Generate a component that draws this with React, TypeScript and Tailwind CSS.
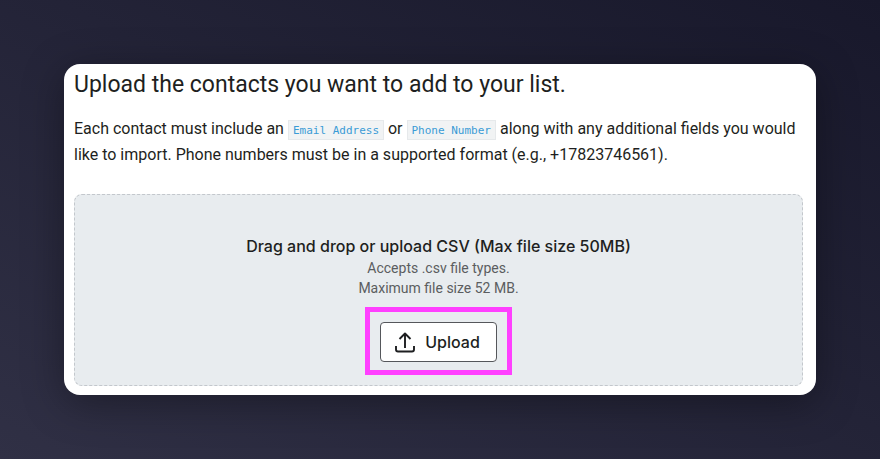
import type { ReactNode } from "react";

function FieldTag({ children }: { children: ReactNode }) {
  return (
    <code className="inline-block h-5 border border-[#e6e9eb] bg-[#f1f3f4] px-1 pt-px align-middle font-['DejaVu_Sans_Mono',monospace] text-[11px] leading-[18px] text-[#3a9bd6]">
      {children}
    </code>
  );
}

function UploadIcon() {
  return (
    <svg
      aria-hidden="true"
      className="size-6"
      viewBox="0 0 24 24"
      fill="none"
      stroke="currentColor"
      strokeWidth="1.9"
      strokeLinejoin="round"
    >
      <path d="M12 18V3.500M6.500 9L12 3.500 17.500 9" />
      <path d="M3 16v3.500a2 2 0 0 0 2 2h14a2 2 0 0 0 2-2V16" />
    </svg>
  );
}

export default function App() {
  return (
    <div className="flex min-h-screen flex-col bg-linear-to-tr from-[#303045] to-[#18182b] p-16 font-['Roboto',sans-serif] text-[#1e1f21]">
      <main className="rounded-2xl bg-white pt-1 pr-[13px] pb-[9px] pl-[10px] shadow-[0_8px_40px_rgba(0,0,0,0.35)]">
        <h1 className="text-[23px] leading-[34px]">Upload the contacts you want to add to your list.</h1>
        <p className="-mr-2 mt-[14px] text-[16px] leading-[26px]">
          Each contact must include an <FieldTag>Email Address</FieldTag> or <FieldTag>Phone Number</FieldTag> along
          with any additional fields you would like to import. Phone numbers must be in a supported format (e.g.,
          +17823746561).
        </p>
        <section className="mt-[26px] flex flex-col items-center rounded-lg border border-dashed border-[#c3c7cc] bg-[#e8ecef] pt-[39px] pb-[10px] text-center">
          <h2 className="font-['Inter',sans-serif] text-[16px] leading-6 font-medium">
            Drag and drop or upload CSV (Max file size 50MB)
          </h2>
          <p className="text-[14px] leading-5 text-[#5b5d60]">Accepts .csv file types.</p>
          <p className="text-[14px] leading-5 text-[#5b5d60]">Maximum file size 52 MB.</p>
          <div className="mt-[9px] border-[5px] border-[#ff40ff] px-[10px] pt-[10px] pb-2">
            <button
              type="button"
              className="flex h-10 items-center gap-2 rounded border border-[#55575b] bg-white pr-4 pl-3 font-['Inter',sans-serif] text-[16px] font-medium"
            >
              <UploadIcon />
              Upload
            </button>
          </div>
        </section>
      </main>
    </div>
  );
}
